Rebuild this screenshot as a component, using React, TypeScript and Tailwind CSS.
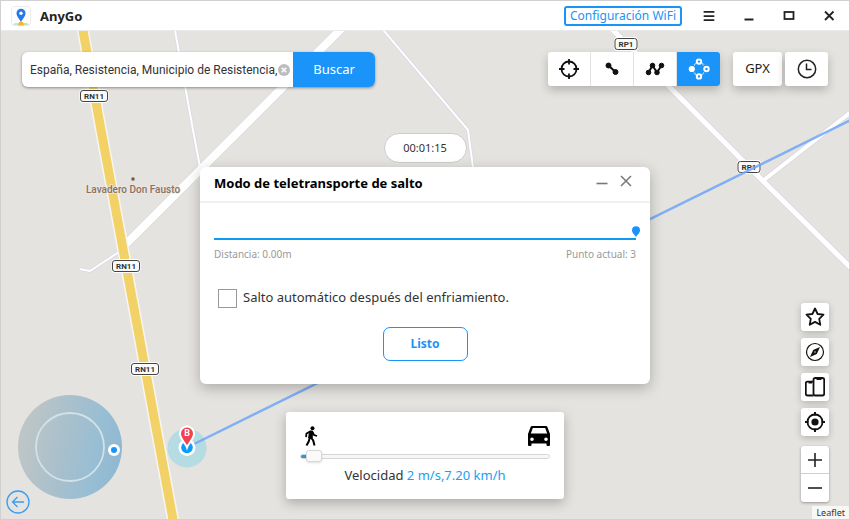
import React from 'react';
import { Menu } from 'lucide-react';

const roads = [
  { d: 'M174 25 L193 130 L200 167 L207 200', width: 2 },
  { d: 'M379 25 L468 130 L474 175', width: 2 },
  { d: 'M122 250 L90 271 L80 269', width: 2 },
  { d: 'M345 25 L124 246', width: 8 },
  { d: 'M608 25 L760 178 L856 273', width: 5 },
  { d: 'M764 180 L856 108', width: 4 },
];

const shields = [
  { label: 'RN11', x: 94, y: 96, w: 27 },
  { label: 'RN11', x: 126, y: 266, w: 27 },
  { label: 'RN11', x: 145, y: 369, w: 27 },
  { label: 'RP1', x: 626, y: 44, w: 22 },
  { label: 'RP1', x: 749, y: 167, w: 22 },
];

/**
 * Street map with the planned route and the current position marker.
 */
const MapCanvas: React.FC = () => (
  <svg
    viewBox="1 31 848 488"
    preserveAspectRatio="xMidYMid slice"
    className="absolute inset-0 h-full w-full"
    role="img"
    aria-label="Mapa"
  >
    <rect x="-500" y="-500" width="2000" height="2000" fill="#e5e3df" />
    <g fill="none" strokeLinejoin="round">
      {roads.map((r) => (
        <path key={r.d} d={r.d} stroke="#d9d8e4" strokeWidth={r.width + 1.5} />
      ))}
      {roads.map((r) => (
        <path key={r.d} d={r.d} stroke="#ffffff" strokeWidth={r.width} />
      ))}
      <path d="M82 25 L101 130 L138 330 L174 525" stroke="#f8f6f0" strokeWidth="12" />
      <path d="M82 25 L101 130 L138 330 L174 525" stroke="#f2d166" strokeWidth="9" />
    </g>

    <g fontFamily="Roboto, sans-serif" textAnchor="middle">
      {shields.map((s) => (
        <g key={`${s.x}-${s.y}`}>
          <rect x={s.x - s.w / 2 - 1} y={s.y - 7} width={s.w + 2} height="14" rx="4" fill="#ffffff" />
          <rect x={s.x - s.w / 2} y={s.y - 5.5} width={s.w} height="11" rx="2.5" fill="#fafafa" stroke="#444444" />
          <text x={s.x} y={s.y + 3} fontSize="8" fontWeight="700" fill="#333333">
            {s.label}
          </text>
        </g>
      ))}
      <circle cx="133" cy="179" r="2" fill="#6f5647" stroke="#efece8" strokeWidth="0.5" />
      <text
        x="133"
        y="193"
        fontSize="10"
        fontWeight="500"
        fill="#8a7061"
        stroke="#ece9e4"
        strokeWidth="1.5"
        paintOrder="stroke"
      >
        Lavadero Don Fausto
      </text>
    </g>

    <circle cx="187" cy="448" r="19.5" fill="#b5dbe3" />
    <path d="M187 447.500 L856 117.500" stroke="#6ea6f7" strokeOpacity="0.85" strokeWidth="2.500" />
    <circle cx="187" cy="447.500" r="8.500" fill="#ffffff" />
    <circle cx="187" cy="447.500" r="5.800" fill="#0d9bf7" />
    <path
      d="M187 447.500 C185.500 443 180 439 180 433.500 A7 7 0 0 1 194 433.500 C194 439 188.500 443 187 447.500 Z"
      fill="#ee4450"
      stroke="#ffffff"
      strokeWidth="2"
    />
    <text
      x="187"
      y="436"
      fontSize="9"
      fontWeight="700"
      fill="#ffffff"
      textAnchor="middle"
      fontFamily="Roboto, sans-serif"
    >
      B
    </text>
  </svg>
);

const TitleBar: React.FC = () => (
  <header className="flex h-[30px] items-center border-b border-[#ebebeb] bg-white pl-[10px]">
    <svg width="20" height="20" viewBox="0 0 20 20" aria-hidden="true">
      <rect x="0.5" y="0.5" width="19" height="19" rx="3" fill="#fdfdfd" stroke="#ececec" />
      <path d="M2 19 L4 17 H8 L8 19 Z" fill="#b9e4f2" />
      <path d="M12 19 V17 H16 L18 19 Z" fill="#bfe6a8" />
      <path d="M7 19.500 L8 16 H12 L13 19.500 Z" fill="#f8b52c" />
      <path d="M10 16.500 C9 13 5.500 11 5.500 7.300 A4.500 4.500 0 0 1 14.500 7.300 C14.500 11 11 13 10 16.500 Z" fill="#2676ee" />
      <circle cx="10" cy="7.300" r="1.700" fill="#ffffff" />
    </svg>
    <h1 className="ml-[9px] flex-1 text-[13px] font-bold leading-5 text-[#222]">AnyGo</h1>
    <button
      type="button"
      className="mr-[7px] h-5 w-[118px] rounded-[3px] border-2 border-[#1a94f5] text-xs leading-4 whitespace-nowrap text-[#1a94f5]"
    >
      Configuración WiFi
    </button>
    <button type="button" aria-label="Menú" className="flex h-7 w-10 items-center justify-center text-[#222]">
      <Menu size={14} strokeWidth={3} />
    </button>
    <button type="button" aria-label="Minimizar" className="flex h-7 w-10 items-center justify-center">
      <svg width="12" height="12" viewBox="0 0 12 12">
        <path d="M1.500 9.500 H10.500" stroke="#222" strokeWidth="2" />
      </svg>
    </button>
    <button type="button" aria-label="Maximizar" className="flex h-7 w-10 items-center justify-center">
      <svg width="12" height="12" viewBox="0 0 12 12">
        <rect x="1.500" y="2" width="9" height="7" fill="none" stroke="#222" strokeWidth="1.800" />
      </svg>
    </button>
    <button type="button" aria-label="Cerrar" className="flex h-7 w-10 items-center justify-center">
      <svg width="12" height="12" viewBox="0 0 12 12">
        <path d="M2 1.500 L10.500 10 M10.500 1.500 L2 10" stroke="#222" strokeWidth="1.800" />
      </svg>
    </button>
  </header>
);

const SearchBox: React.FC = () => {
  const [query, setQuery] = React.useState('España, Resistencia, Municipio de Resistencia,');

  return (
    <form
      onSubmit={(e) => e.preventDefault()}
      className="flex h-[35px] overflow-hidden rounded-md bg-white shadow-[0_1px_3px_rgba(0,0,0,0.4)]"
    >
      <input
        type="text"
        aria-label="Buscar ubicación"
        value={query}
        onChange={(e) => setQuery(e.target.value)}
        className="w-[256px] pl-2 font-[Roboto,sans-serif] text-xs text-[#333] outline-none"
      />
      <button type="button" aria-label="Borrar" onClick={() => setQuery('')} className="w-[15px]">
        <svg width="12" height="12" viewBox="0 0 12 12">
          <circle cx="6" cy="6" r="6" fill="#bdbdbd" />
          <path d="M3.700 3.700 L8.300 8.300 M8.300 3.700 L3.700 8.300" stroke="#fff" strokeWidth="1.500" />
        </svg>
      </button>
      <button type="submit" className="w-[82px] bg-[#1a94f9] text-[13px] text-white">
        Buscar
      </button>
    </form>
  );
};

const modes = [
  {
    label: 'Teletransporte',
    icon: (
      <g fill="none" stroke="#111" strokeWidth="1.800">
        <circle cx="11" cy="11" r="7.500" />
        <path d="M11 1 V6.500 M11 15.500 V21 M1 11 H6.500 M15.500 11 H21" />
      </g>
    ),
  },
  {
    label: 'Modo de dos puntos',
    icon: (
      <g fill="#111" stroke="#111">
        <path d="M7.500 7.500 L14.500 14" strokeWidth="2.200" />
        <circle cx="7.500" cy="7.500" r="2.500" />
        <circle cx="14.500" cy="14" r="2.500" />
      </g>
    ),
  },
  {
    label: 'Modo multipunto',
    icon: (
      <g fill="#111" stroke="#111">
        <path d="M4.500 14.500 L8.500 7.500 L13 14.500 L17.500 7.500" fill="none" strokeWidth="2" />
        <circle cx="4.500" cy="14.500" r="2.300" />
        <circle cx="8.500" cy="7.500" r="2.300" />
        <circle cx="13" cy="14.500" r="2.300" />
        <circle cx="17.500" cy="7.500" r="2.300" />
      </g>
    ),
  },
  {
    label: 'Modo de salto',
    icon: (
      <g fill="none" stroke="#fff" strokeWidth="2">
        <path
          d="M6 7.300 L7.700 5.500 M14.300 5.500 L16 7.300 M16 14.700 L14.300 16.500 M7.700 16.500 L6 14.700"
          strokeWidth="1.300"
          strokeDasharray="1 0.800"
        />
        <circle cx="11" cy="3.600" r="2.200" />
        <circle cx="18.500" cy="11" r="2.200" />
        <circle cx="11" cy="18.400" r="2.200" />
        <circle cx="3.800" cy="11" r="2.100" fill="#fff" />
      </g>
    ),
  },
];

const ModeToolbar: React.FC = () => {
  const [active, setActive] = React.useState(3);

  return (
    <div className="flex">
      <div className="flex h-[34px] divide-x divide-[#e2e2e2] overflow-hidden rounded-[3px] bg-white shadow-[0_4px_10px_rgba(0,0,0,0.22)]">
        {modes.map((m, i) => (
          <button
            key={m.label}
            type="button"
            aria-label={m.label}
            aria-pressed={i === active}
            onClick={() => setActive(i)}
            className="flex w-[43px] items-center justify-center aria-pressed:bg-[#1a94f9]"
          >
            <svg width="22" height="22" viewBox="0 0 22 22">
              {m.icon}
            </svg>
          </button>
        ))}
      </div>
      <button
        type="button"
        className="ml-[13px] h-[34px] w-[49px] rounded-[3px] bg-white text-[13px] text-[#222] shadow-[0_4px_10px_rgba(0,0,0,0.22)]"
      >
        GPX
      </button>
      <button
        type="button"
        aria-label="Historial"
        className="ml-[3px] flex h-[34px] w-[43px] items-center justify-center rounded-[3px] bg-white shadow-[0_4px_10px_rgba(0,0,0,0.22)]"
      >
        <svg width="20" height="20" viewBox="0 0 20 20" fill="none" stroke="#222" strokeWidth="1.500">
          <circle cx="10" cy="10" r="8.700" />
          <path d="M9.500 4.500 V10.500 H14.500" />
        </svg>
      </button>
    </div>
  );
};

const Joystick: React.FC = () => (
  <div className="flex flex-col items-start pb-[5px] pl-[5px]">
    <svg width="104" height="104" viewBox="0 0 104 104" className="ml-3 -mb-[9px]" role="img" aria-label="Joystick">
      <defs>
        <linearGradient id="pad" x1="0" y1="0.4" x2="1" y2="0.6">
          <stop offset="0" stopColor="#c0c6c6" />
          <stop offset="0.5" stopColor="#a5bfcd" />
          <stop offset="0.75" stopColor="#98bed4" />
          <stop offset="1" stopColor="#8fb8d1" />
        </linearGradient>
      </defs>
      <circle cx="52" cy="52" r="52" fill="url(#pad)" />
      <circle cx="52" cy="52" r="34" fill="none" stroke="#d3e1e8" strokeWidth="1.800" />
      <circle cx="96" cy="55" r="6" fill="#ffffff" />
      <circle cx="96" cy="55" r="3" fill="#1a94f9" />
    </svg>
    <button type="button" aria-label="Volver" className="relative">
      <svg width="24" height="24" viewBox="0 0 24 24" fill="none" stroke="#3b9df0" strokeWidth="1.300">
        <circle cx="12" cy="12" r="11" />
        <path d="M18 12 H6.500 M11.500 7 L6.500 12 L11.500 17" />
      </svg>
    </button>
  </div>
);

const JumpDialog: React.FC = () => (
  <section
    aria-labelledby="jump-title"
    className="w-full rounded-md bg-white shadow-[0_4px_14px_rgba(0,0,0,0.25)]"
  >
    <div className="flex h-9 items-center border-b-2 border-[#f0f0f0] pr-3 pl-3.5">
      <h2 id="jump-title" className="flex-1 text-[13px] font-bold text-black">
        Modo de teletransporte de salto
      </h2>
      <button type="button" aria-label="Minimizar" className="flex h-6 w-6 items-center justify-center">
        <svg width="12" height="12" viewBox="0 0 12 12">
          <path d="M0.500 5.500 H11.500" stroke="#777" strokeWidth="1.600" />
        </svg>
      </button>
      <button type="button" aria-label="Cerrar" className="flex h-7 w-6 items-start justify-center pt-[5px]">
        <svg width="12" height="12" viewBox="0 0 12 12">
          <path d="M1 1 L11 11 M11 1 L1 11" stroke="#777" strokeWidth="1.500" />
        </svg>
      </button>
    </div>
    <div className="flex flex-col px-3.5 pt-[23px] pb-[23px]">
      <svg width="8" height="12" viewBox="0 0 8 12" className="-mr-1 self-end overflow-visible" aria-hidden="true">
        <path d="M4 11 C3 8.500 0 7.500 0 4.200 A4 4 0 0 1 8 4.200 C8 7.500 5 8.500 4 11 Z" fill="#1a94f9" />
      </svg>
      <div className="h-0.5 bg-[#0f9bf2]" />
      <div className="mt-1 flex justify-between text-[10px] leading-5 text-[#999]">
        <span>Distancia: 0.00m</span>
        <span>Punto actual: 3</span>
      </div>
      <label className="mt-6 flex h-5 items-center gap-1.5 pl-1 text-[13px] text-[#333]">
        <input
          type="checkbox"
          className="size-[19px] appearance-none border border-[#999] bg-white checked:bg-[#1a94f9]"
        />
        Salto automático después del enfriamiento.
      </label>
      <button
        type="button"
        className="mt-[19px] h-[34px] w-[85px] self-center rounded-[7px] border border-[#1a94f9] text-xs font-bold text-[#1a94f9]"
      >
        Listo
      </button>
    </div>
  </section>
);

const SpeedCard: React.FC = () => {
  const [speed, setSpeed] = React.useState(2);

  return (
    <section className="w-[278px] rounded-[3px] bg-white px-3.5 pt-3.5 pb-3.5 shadow-[0_4px_12px_rgba(0,0,0,0.25)]">
      <div className="flex h-[21px] justify-between pl-[3px]">
        <svg width="16" height="20" viewBox="0 0 16 20" fill="none" stroke="#000" aria-hidden="true">
          <circle cx="9.500" cy="2.200" r="2" fill="#000" stroke="none" />
          <path d="M6.500 5 L9.500 5 L9.200 12 L5.700 12 Z" fill="#000" strokeWidth="1" strokeLinejoin="round" />
          <path d="M7 5.500 L3.500 7.500 L3 11 M9.500 6 L11 9 L14 10" strokeWidth="1.800" />
          <path d="M6.800 11.500 L5.700 15.500 L3.500 19.500 M8 11.500 L10.200 14.500 L11.500 19.500" strokeWidth="2" />
        </svg>
        <svg width="22" height="20" viewBox="0 0 22 20" aria-hidden="true">
          <path
            fillRule="evenodd"
            d="M4 0 H18 Q19 0 19.400 1 L22 8 V19 Q22 20 21 20 H19.500 Q18.500 20 18.500 19 V17.500 H3.500 V19 Q3.500 20 2.500 20 H1 Q0 20 0 19 V8 L2.600 1 Q3 0 4 0 Z M4.800 2 L2.800 7.500 H19.200 L17.200 2 Z M4 11.500 A1.800 1.800 0 1 0 4 15.100 A1.800 1.800 0 1 0 4 11.500 Z M18 11.500 A1.800 1.800 0 1 0 18 15.100 A1.800 1.800 0 1 0 18 11.500 Z"
            fill="#000"
          />
        </svg>
      </div>
      <input
        type="range"
        min={0}
        max={100}
        value={speed}
        onChange={(e) => setSpeed(Number(e.target.value))}
        aria-label="Velocidad"
        className="block h-[18px] w-full appearance-none bg-transparent [&::-webkit-slider-runnable-track]:h-[5px] [&::-webkit-slider-runnable-track]:rounded-sm [&::-webkit-slider-runnable-track]:border [&::-webkit-slider-runnable-track]:border-[#d6d6d6] [&::-webkit-slider-runnable-track]:bg-[linear-gradient(90deg,#1a9ff0_6px,#f7f7f7_6px)] [&::-webkit-slider-thumb]:-mt-[5px] [&::-webkit-slider-thumb]:h-3 [&::-webkit-slider-thumb]:w-4 [&::-webkit-slider-thumb]:appearance-none [&::-webkit-slider-thumb]:rounded-[3px] [&::-webkit-slider-thumb]:border [&::-webkit-slider-thumb]:border-[#d8d8d8] [&::-webkit-slider-thumb]:bg-[#fafafa] [&::-webkit-slider-thumb]:shadow-sm"
      />
      <p className="text-center text-[13px] leading-5 text-[#333]">
        Velocidad <span className="text-[#1a9ff0]">2 m/s,7.20 km/h</span>
      </p>
    </section>
  );
};

const sideTools = [
  {
    label: 'Favoritos',
    icon: (
      <path
        d="M10 1.500 L12.600 7 L18.500 7.700 L14.200 11.800 L15.300 17.800 L10 14.900 L4.700 17.800 L5.800 11.800 L1.500 7.700 L7.400 7 Z"
        strokeWidth="1.800"
        strokeLinejoin="round"
      />
    ),
  },
  {
    label: 'Brújula',
    icon: (
      <>
        <circle cx="10" cy="10" r="8.500" strokeWidth="1.200" />
        <path d="M15 5 L11.800 12 L5 15 L8.200 8 Z" fill="#111" stroke="none" />
        <circle cx="10" cy="10" r="0.900" fill="#999" stroke="none" />
      </>
    ),
  },
  {
    label: 'Dispositivos',
    icon: (
      <>
        <path d="M8.500 4.700 H2.500 Q0.800 4.700 0.800 6.400 V16.800 Q0.800 18.500 2.500 18.500 H8.500" strokeWidth="1.800" />
        <rect x="8.500" y="1" width="10.700" height="17.500" rx="1.700" strokeWidth="1.800" />
        <path d="M11.500 2 H16.500 M3.500 5.500 H7" strokeWidth="2" />
      </>
    ),
  },
  {
    label: 'Mi ubicación',
    icon: (
      <>
        <circle cx="10" cy="10" r="7.500" strokeWidth="1.800" />
        <circle cx="10" cy="10" r="3.600" fill="#111" stroke="none" />
        <path d="M10 0 V3.500 M10 16.500 V20 M0 10 H3.500 M16.500 10 H20" strokeWidth="2" />
      </>
    ),
  },
];

const SideTools: React.FC = () => (
  <div className="flex flex-col items-end">
    <div className="flex flex-col gap-[7px] pr-5">
      {sideTools.map((t) => (
        <button
          key={t.label}
          type="button"
          aria-label={t.label}
          className="flex size-7 items-center justify-center rounded-[3px] bg-white shadow-[0_2px_7px_rgba(0,0,0,0.22)]"
        >
          <svg width="20" height="20" viewBox="0 0 20 20" fill="none" stroke="#111">
            {t.icon}
          </svg>
        </button>
      ))}
      <div className="mt-[3px] flex flex-col divide-y divide-[#d0d0d0] rounded-[3px] bg-white shadow-[0_1px_3px_rgba(0,0,0,0.35)]">
        <button type="button" aria-label="Acercar" className="flex h-7 w-7 items-center justify-center">
          <svg width="14" height="14" viewBox="0 0 14 14">
            <path d="M7 0 V14 M0 7 H14" stroke="#222" strokeWidth="1.600" />
          </svg>
        </button>
        <button type="button" aria-label="Alejar" className="flex h-7 w-7 items-center justify-center">
          <svg width="14" height="14" viewBox="0 0 14 14">
            <path d="M0 7 H14" stroke="#222" strokeWidth="1.600" />
          </svg>
        </button>
      </div>
    </div>
    <a href="https://leafletjs.com" className="mt-1 bg-white/70 px-1 text-[9px] leading-[13px] text-[#333]">
      Leaflet
    </a>
  </div>
);

export default function App() {
  return (
    <div className="flex min-h-screen flex-col border border-[#d0d0d0] bg-white font-['Noto_Sans','Open_Sans',sans-serif]">
      <TitleBar />
      <main className="relative flex flex-1 flex-col">
        <MapCanvas />
        <div className="relative flex flex-1 flex-col">
          <div className="flex items-start justify-between px-[21px] pt-[21px]">
            <SearchBox />
            <ModeToolbar />
          </div>
          <div className="grid flex-1 grid-cols-[1fr_minmax(0,450px)_1fr] items-end">
            <Joystick />
            <div className="flex flex-col items-center pb-5">
              <time className="h-[30px] w-[83px] rounded-full border border-[#ccc] bg-white text-center text-[11px] leading-7 text-[#333]">
                00:01:15
              </time>
              <div className="mt-1 mb-7 w-full">
                <JumpDialog />
              </div>
              <SpeedCard />
            </div>
            <SideTools />
          </div>
        </div>
      </main>
    </div>
  );
}
